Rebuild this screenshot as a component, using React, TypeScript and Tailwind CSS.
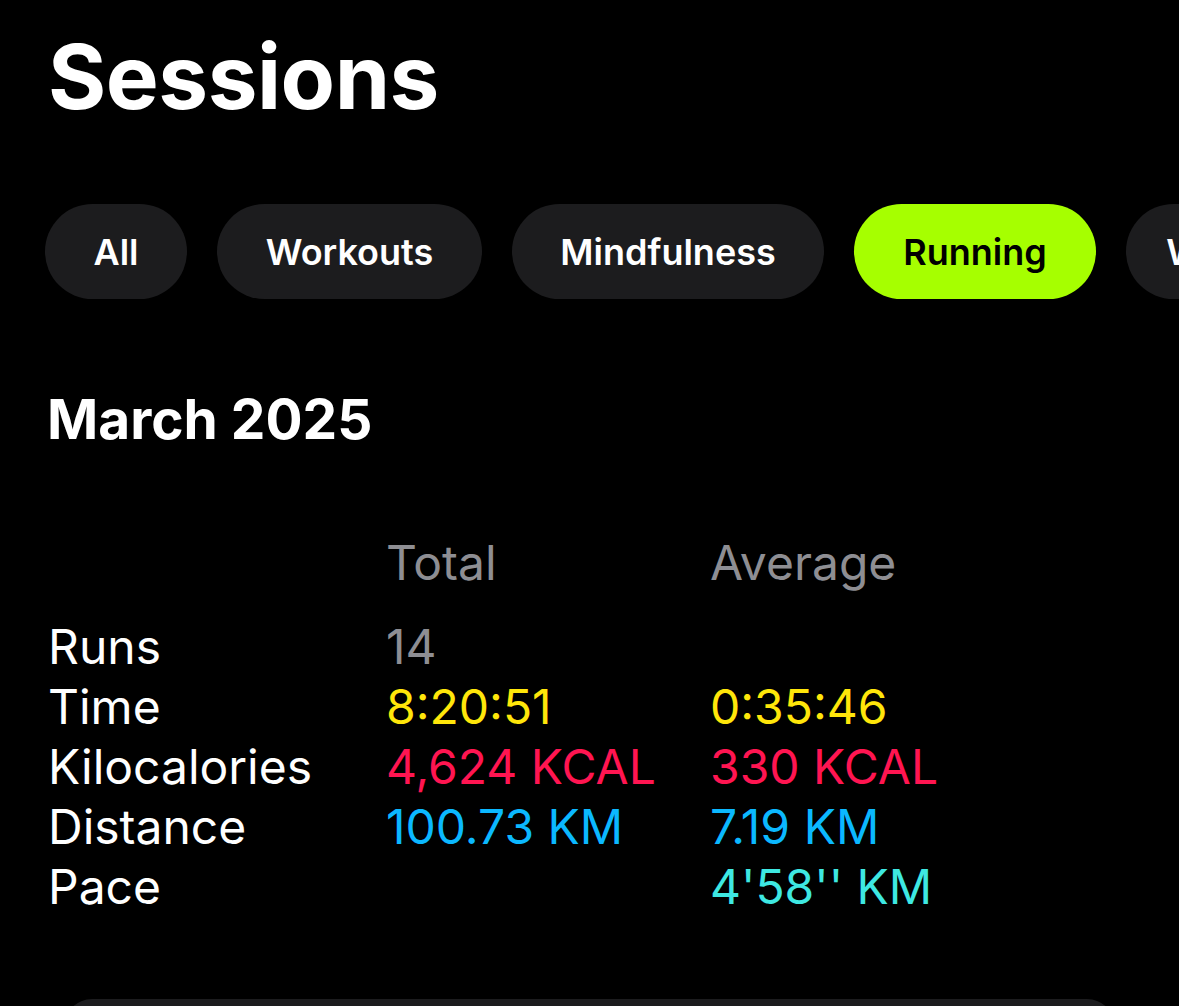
const pills = [
  { label: 'All', active: false, w: 'w-[142px]' },
  { label: 'Workouts', active: false, w: 'w-[265px]' },
  { label: 'Mindfulness', active: false, w: 'w-[312px]' },
  { label: 'Running', active: true, w: 'w-[242px]' },
  { label: 'Walking', active: false, w: 'w-[220px]' },
];

const rows = [
  { label: 'Runs', total: '14', avg: '', totalColor: 'text-[#8e8e93]', avgColor: '' },
  { label: 'Time', total: '8:20:51', avg: '0:35:46', totalColor: 'text-[#ffe60a]', avgColor: 'text-[#ffe60a]' },
  { label: 'Kilocalories', total: '4,624 KCAL', avg: '330 KCAL', totalColor: 'text-[#ff1551]', avgColor: 'text-[#ff1551]' },
  { label: 'Distance', total: '100.73 KM', avg: '7.19 KM', totalColor: 'text-[#0bb8ff]', avgColor: 'text-[#0bb8ff]' },
  { label: 'Pace', total: '', avg: "4'58'' KM", totalColor: '', avgColor: 'text-[#3ee8e2]' },
];

export default function App() {
  return (
    <div className="h-[1006px] w-[1179px] overflow-hidden bg-black text-white font-['Inter',sans-serif]">
      <h1 className="pl-[48px] pt-[32px] text-[89px] font-bold leading-none tracking-[-0.5px]">Sessions</h1>

      {/* filter chips, last one runs off the right edge */}
      <div className="mt-[83px] flex gap-[30px] overflow-hidden pl-[45px]">
        {pills.map((p) => (
          <div
            key={p.label}
            className={`flex h-[95px] shrink-0 items-center justify-center rounded-full text-[36px] font-semibold ${p.w} ${
              p.active ? 'bg-[#a6ff00] text-black' : 'bg-[#1c1c1e] text-white'
            }`}
          >
            {p.label}
          </div>
        ))}
      </div>

      <h2 className="mt-[93px] pl-[47px] text-[55px] font-bold leading-none">March 2025</h2>

      <div className="mt-[86px] grid grid-cols-[338px_324px_1fr] pl-[48px] text-[48px] leading-[60px]">
        <div />
        <div className="text-[#8e8e93]">Total</div>
        <div className="text-[#8e8e93]">Average</div>
        <div className="col-span-3 h-[24px]" />
        {rows.map((r) => (
          <div key={r.label} className="contents">
            <div>{r.label}</div>
            <div className={r.totalColor}>{r.total}</div>
            <div className={r.avgColor}>{r.avg}</div>
          </div>
        ))}
      </div>

      <div className="mx-[64px] mt-[82px] h-[60px] rounded-[28px] bg-[#1c1c1e]" />
    </div>
  );
}
